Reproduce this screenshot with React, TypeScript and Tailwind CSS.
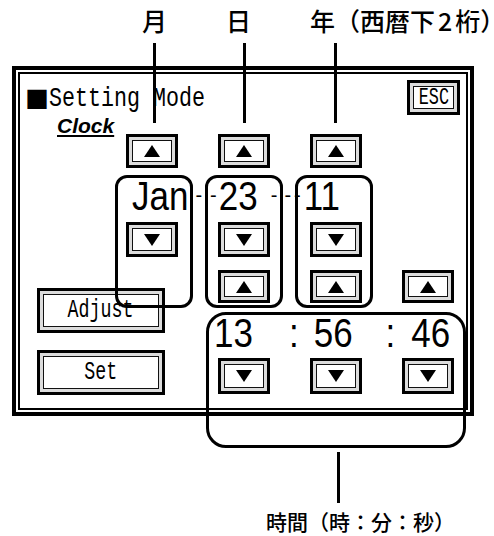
import React from "react";

const mono = "font-['Liberation_Mono',monospace]";
const sans = "font-['Liberation_Sans',Arial,sans-serif]";
const cjk = "font-['Noto_Sans_CJK_JP',sans-serif]";

function Tri({ dir }: { dir: "up" | "down" }) {
  return (
    <svg width="16" height="12" viewBox="0 0 16 12">
      <polygon points={dir === "up" ? "8,0 16,12 0,12" : "0,0 16,0 8,12"} fill="#000" />
    </svg>
  );
}

function Bevel({ className = "", children }: { className?: string; children?: React.ReactNode }) {
  return (
    <div className={`flex border-[3px] border-black bg-[#dcdcdc] p-[3px] ${className}`}>
      <div className="flex flex-1 items-center justify-center border-[1.5px] border-[#111] bg-white">
        {children}
      </div>
    </div>
  );
}

const ARROWS: { cls: string; dir: "up" | "down" }[] = [
  { cls: "col-start-1 row-start-1", dir: "up" },
  { cls: "col-start-2 row-start-1", dir: "up" },
  { cls: "col-start-3 row-start-1", dir: "up" },
  { cls: "col-start-1 row-start-3", dir: "down" },
  { cls: "col-start-2 row-start-3", dir: "down" },
  { cls: "col-start-3 row-start-3", dir: "down" },
  { cls: "col-start-2 row-start-5", dir: "up" },
  { cls: "col-start-3 row-start-5", dir: "up" },
  { cls: "col-start-4 row-start-5", dir: "up" },
  { cls: "col-start-2 row-start-7", dir: "down" },
  { cls: "col-start-3 row-start-7", dir: "down" },
  { cls: "col-start-4 row-start-7", dir: "down" },
];

const big = `inline-block scale-y-[1.15] ${sans} text-[35px] leading-none`;
const dash = `inline-block ${sans} text-[20px] leading-none`;

export default function App() {
  return (
    <div className="relative h-[536px] w-[494px] overflow-hidden bg-white text-black">
      {/* screen frame */}
      <div className="ml-[12px] mt-[66px] h-[350px] w-[462px] border-4 border-black p-[2px]">
        <div className="relative h-full w-full border-2 border-black">
          <div className="flex items-center justify-between pl-[5px] pr-[6px] pt-[6px]">
            <div className="flex items-center">
              <span className={`${cjk} text-[24px] leading-none`}>■</span>
              <span className={`inline-block origin-left scale-x-[0.833] scale-y-[1.08] ${mono} text-[26px] leading-none`}>
                Setting Mode
              </span>
            </div>
            <Bevel className="h-[35px] w-[53px]">
              <span className={`inline-block scale-x-[0.8] scale-y-[1.1] ${mono} text-[21px] leading-none`}>ESC</span>
            </Bevel>
          </div>
          <div className={`ml-[37px] ${sans} text-[21px] font-bold italic leading-none underline decoration-2 underline-offset-[2px]`}>
            Clock
          </div>

          {/* date / time editor */}
          <div className="absolute left-[106px] top-[60px] grid grid-cols-[repeat(4,52px)] grid-rows-[34px_54px_35px_13px_33px_55px_36px] gap-x-[40px]">
            {ARROWS.map((a, i) => (
              <Bevel key={i} className={a.cls}>
                <Tri dir={a.dir} />
              </Bevel>
            ))}
            <div className="col-span-4 col-start-1 row-start-2 flex items-center whitespace-nowrap">
              <span className={`${big} ml-[6px]`}>Jan</span>
              <span className={`${dash} ml-[7px]`}>-</span>
              <span className={`${dash} ml-[8px]`}>-</span>
              <span className={`${big} ml-[2px]`}>23</span>
              <span className={`${dash} ml-[13px]`}>-</span>
              <span className={`${dash} ml-[7px]`}>-</span>
              <span className={`${dash} ml-[3px]`}>-</span>
              <span className={`${big} ml-[3px]`}>11</span>
            </div>
            <div className="col-span-3 col-start-2 row-start-6 flex items-center whitespace-nowrap pt-[4px]">
              <span className={`${big} ml-[-4px]`}>13</span>
              <span className={`${big} ml-[36px]`}>:</span>
              <span className={`${big} ml-[15px]`}>56</span>
              <span className={`${big} ml-[33px]`}>:</span>
              <span className={`${big} ml-[16px]`}>46</span>
            </div>
          </div>

          <div className="absolute left-[17px] top-[214px] flex flex-col gap-[17px]">
            <Bevel className="h-[45px] w-[128px] border-4">
              <span className={`inline-block scale-x-[0.833] scale-y-[1.15] ${mono} text-[22px] leading-none`}>Adjust</span>
            </Bevel>
            <Bevel className="h-[45px] w-[128px] border-4">
              <span className={`inline-block scale-x-[0.833] scale-y-[1.15] ${mono} text-[22px] leading-none`}>Set</span>
            </Bevel>
          </div>
        </div>
      </div>

      <p className={`ml-[266px] mt-[95px] whitespace-nowrap ${cjk} text-[21px] font-medium leading-none`}>時間（時：分：秒）</p>

      {/* annotations */}
      <span className={`absolute left-[142px] top-[8px] ${cjk} text-[25px] font-medium leading-none`}>月</span>
      <span className={`absolute left-[226px] top-[8px] ${cjk} text-[25px] font-medium leading-none`}>日</span>
      <span className={`absolute left-[310px] top-[8px] flex whitespace-nowrap ${cjk} text-[25px] font-medium leading-none`}>
        年（西暦下<span className="mx-[3px]">2</span>桁<span className="tracking-[-14px]">）</span>
      </span>
      <div className="absolute left-[153px] top-[43px] h-[80px] w-[3px] bg-black" />
      <div className="absolute left-[243px] top-[43px] h-[80px] w-[3px] bg-black" />
      <div className="absolute left-[334px] top-[43px] h-[80px] w-[3px] bg-black" />
      <div className="absolute left-[115px] top-[175px] h-[133px] w-[78px] rounded-[12px] border-[3px] border-black" />
      <div className="absolute left-[205px] top-[175px] h-[133px] w-[78px] rounded-[12px] border-[3px] border-black" />
      <div className="absolute left-[295px] top-[175px] h-[133px] w-[78px] rounded-[12px] border-[3px] border-black" />
      <div className="absolute left-[206px] top-[312px] h-[136px] w-[260px] rounded-[20px] border-[3px] border-black" />
      <div className="absolute left-[337px] top-[452px] h-[51px] w-[3px] bg-black" />
    </div>
  );
}
